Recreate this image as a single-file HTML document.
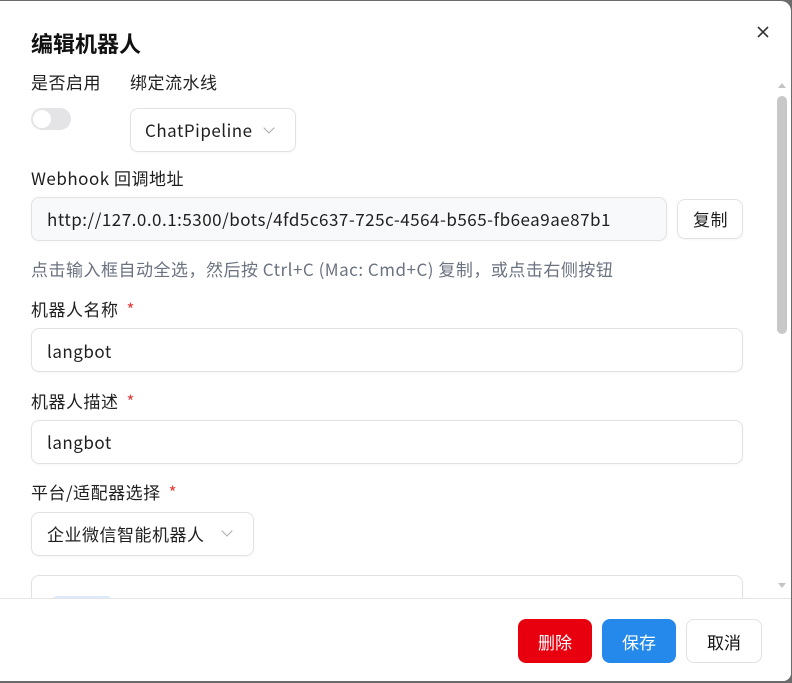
<!DOCTYPE html>
<html><head><meta charset="utf-8"><style>
*{box-sizing:border-box;margin:0;padding:0}
body{width:792px;height:683px;background:#6b6b6b;font-family:"Noto Sans CJK SC","Liberation Sans",sans-serif;overflow:hidden;position:relative}
.dlg{position:absolute;left:0;top:1px;width:791px;height:680px;background:#fff;border-radius:0 10px 8px 0}
.a{position:absolute}
.t{font-size:17px;line-height:20px;letter-spacing:0.5px;color:#1f1f1f;white-space:nowrap}
.box{position:absolute;border:1px solid #e2e2e2;border-radius:8px;background:#fff;box-shadow:0 1px 2px rgba(0,0,0,.04)}
.req{color:#e53e3e;margin-left:8px}
.chev{position:absolute;width:8px;height:8px;border-right:1.3px solid #aaa;border-bottom:1.3px solid #aaa;transform:rotate(45deg)}
.btn{position:absolute;top:618px;height:44px;border-radius:8px;font-size:17px;display:flex;align-items:center;justify-content:center}
</style></head><body>
<div class="dlg">
<div class="a" style="left:31px;top:28px;font-size:22px;line-height:28px;font-weight:bold;color:#111">编辑机器人</div>
<svg class="a" style="left:756px;top:24px" width="14" height="14" viewBox="0 0 14 14"><path d="M2 2L12 12M12 2L2 12" stroke="#333" stroke-width="1.6"/></svg>
<div class="a t" style="left:31px;top:71px">是否启用</div>
<div class="a t" style="left:130px;top:71px">绑定流水线</div>
<div class="a" style="left:31px;top:107px;width:40px;height:22px;border-radius:11px;background:#e4e4e7"><div style="position:absolute;left:2px;top:2px;width:18px;height:18px;border-radius:50%;background:#fff"></div></div>
<div class="box" style="left:130px;top:107px;width:166px;height:44px"></div>
<div class="a t" style="left:145px;top:119px">ChatPipeline</div>
<div class="chev" style="left:265px;top:123px"></div>
<div class="a t" style="left:31px;top:167px">Webhook 回调地址</div>
<div class="box" style="left:31px;top:196px;width:636px;height:44px;background:#f8f9fb"></div>
<div class="a t" style="left:47px;top:208px">http://127.0.0.1:5300/bots/4fd5c637-725c-4564-b565-fb6ea9ae87b1</div>
<div class="box" style="left:677px;top:198px;width:66px;height:40px"></div>
<div class="a t" style="left:693px;top:208px">复制</div>
<div class="a t" style="left:31px;top:258px;color:#6b7280">点击输入框自动全选，然后按 Ctrl+C (Mac: Cmd+C) 复制，或点击右侧按钮</div>
<div class="a t" style="left:31px;top:298px">机器人名称<span class="req">*</span></div>
<div class="box" style="left:31px;top:327px;width:712px;height:44px"></div>
<div class="a t" style="left:47px;top:340px">langbot</div>
<div class="a t" style="left:31px;top:390px">机器人描述<span class="req">*</span></div>
<div class="box" style="left:31px;top:419px;width:712px;height:44px"></div>
<div class="a t" style="left:47px;top:431px">langbot</div>
<div class="a t" style="left:31px;top:481px">平台/适配器选择<span class="req">*</span></div>
<div class="box" style="left:31px;top:511px;width:223px;height:44px"></div>
<div class="a t" style="left:47px;top:523px">企业微信智能机器人</div>
<div class="chev" style="left:223px;top:526px"></div>
<div class="box" style="left:31px;top:574px;width:712px;height:60px"></div>
<div class="a" style="left:52px;top:595px;width:60px;height:10px;border-radius:6px;background:#dbeafe"></div>
<div class="a" style="left:777px;top:95px;width:10px;height:238px;border-radius:5px;background:#c8c8c8"></div>
<div class="a" style="left:778px;top:82px;width:0;height:0;border-left:4px solid transparent;border-right:4px solid transparent;border-bottom:5px solid #c4c4c4"></div>
<div class="a" style="left:778px;top:582px;width:0;height:0;border-left:4px solid transparent;border-right:4px solid transparent;border-top:5px solid #c4c4c4"></div>
<div class="a" style="left:0;top:597px;width:791px;height:83px;background:#fff;border-top:1px solid #e5e5e5;border-radius:0 0 8px 0"></div>
<div class="btn" style="left:518px;width:74px;background:#e8000f;color:#fff">删除</div>
<div class="btn" style="left:602px;width:74px;background:#2589eb;color:#fff">保存</div>
<div class="btn" style="left:686px;width:76px;background:#fff;border:1px solid #e2e2e2;color:#111">取消</div>
</div>
</body></html>
